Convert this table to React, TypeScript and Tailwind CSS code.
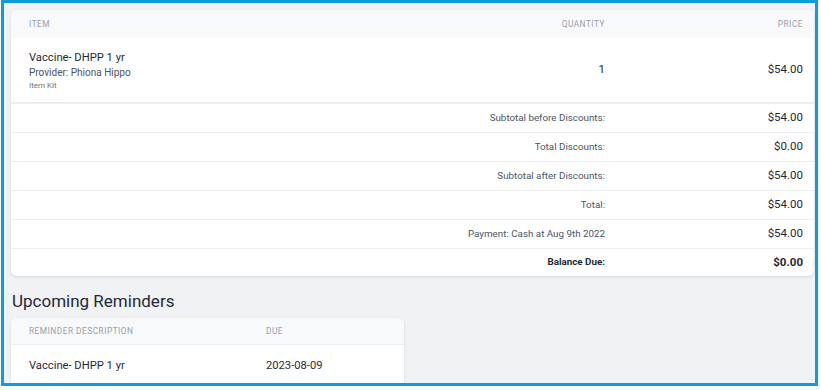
import React from "react";

const font = { fontFamily: "Roboto, 'Liberation Sans', sans-serif" };

function SummaryRow({ label, value, bold, last }: { label: string; value: string; bold?: boolean; last?: boolean }) {
  return (
    <div className={`flex items-center ${last ? "h-[27px]" : "h-[29px] border-b border-[#eceef1]"}`}>
      <div className={`flex-1 text-right pr-[11px] text-[9.8px] ${bold ? "font-bold text-[#1f2937]" : "text-[#4b5563]"}`}>{label}</div>
      <div className={`w-[198px] pr-[11px] text-right text-[11.5px] ${bold ? "font-bold text-[#1f2937]" : "text-[#1f2937]"}`}>{value}</div>
    </div>
  );
}

export default function App() {
  return (
    <div className="w-[821px] h-[390px] bg-white overflow-hidden" style={font}>
      <div className="ml-[1px] w-[817px] h-[386px] border-[3px] border-[#0a9fdc] bg-[#f1f2f4] overflow-hidden pl-[7px] pr-[1px] pt-[7px]">
        <div className="bg-white rounded-md shadow-[0_1px_3px_rgba(0,0,0,0.12)] overflow-hidden">
          <div className="flex items-center h-[28px] bg-[#f8f9fb] text-[8.3px] tracking-[0.06em] text-[#9aa0a8] uppercase">
            <div className="flex-1 pl-[18px]">Item</div>
            <div className="w-[150px] pr-[11px] text-right">Quantity</div>
            <div className="w-[198px] pr-[11px] text-right">Price</div>
          </div>
          <div className="flex items-center h-[66px] border-b-2 border-[#eceef1]">
            <div className="flex-1 pl-[18px] flex flex-col">
              <div className="text-[11.2px] leading-[16px] text-[#1f2937]">Vaccine- DHPP 1 yr</div>
              <div className="text-[10px] leading-[14px] text-[#4b5563]">Provider: Phiona Hippo</div>
              <div className="text-[8px] leading-[11px] text-[#6b7280]">Item Kit</div>
            </div>
            <div className="w-[150px] pr-[11px] text-right text-[11.5px] text-[#1f2937]">1</div>
            <div className="w-[198px] pr-[11px] text-right text-[11.5px] text-[#1f2937]">$54.00</div>
          </div>
          <SummaryRow label="Subtotal before Discounts:" value="$54.00" />
          <SummaryRow label="Total Discounts:" value="$0.00" />
          <SummaryRow label="Subtotal after Discounts:" value="$54.00" />
          <SummaryRow label="Total:" value="$54.00" />
          <SummaryRow label="Payment: Cash at Aug 9th 2022" value="$54.00" />
          <SummaryRow label="Balance Due:" value="$0.00" bold last />
        </div>
        <div className="mt-[13px] mb-[5px] pl-[1px] text-[17px] leading-[24px] text-[#1f2937]">Upcoming Reminders</div>
        <div className="w-[393px] bg-white rounded-md shadow-[0_1px_3px_rgba(0,0,0,0.12)] overflow-hidden">
          <div className="flex items-center h-[27px] bg-[#f8f9fb] border-b border-[#eceef1] text-[8.3px] tracking-[0.06em] text-[#9aa0a8] uppercase">
            <div className="w-[255px] pl-[18px]">Reminder Description</div>
            <div className="flex-1">Due</div>
          </div>
          <div className="flex items-center h-[42px] text-[11.2px] text-[#1f2937]">
            <div className="w-[255px] pl-[18px]">Vaccine- DHPP 1 yr</div>
            <div className="flex-1">2023-08-09</div>
          </div>
        </div>
      </div>
    </div>
  );
}
